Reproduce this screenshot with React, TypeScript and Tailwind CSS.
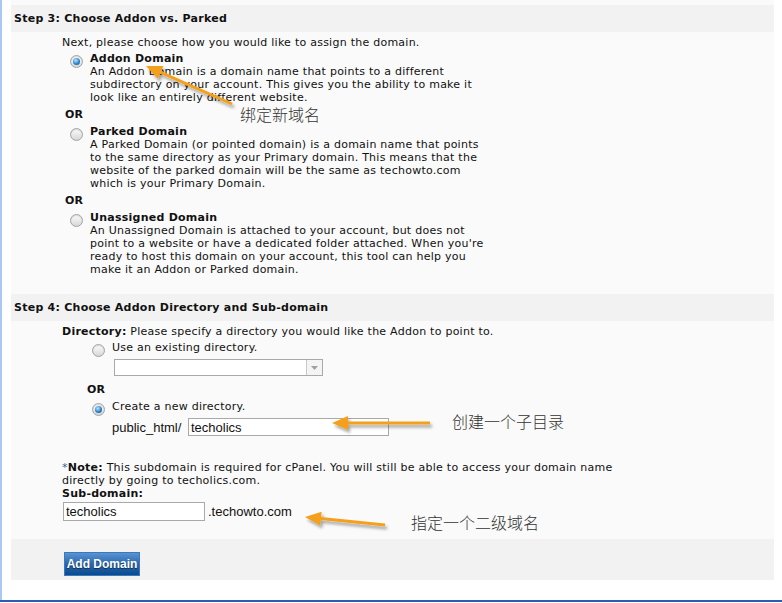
// cPanel Addon Domain form — steps 3 and 4, with the orange note arrows on top.

const body = "font-['DejaVu_Sans','Verdana',sans-serif] text-[11px] leading-[13px] tracking-[0.25px] text-[#111]";
const arial = "font-['Liberation_Sans','Arial',sans-serif] text-[13px] tracking-normal";
const cjk = "font-['Noto_Sans_CJK_SC',sans-serif] text-[16px] leading-[20px] font-light tracking-normal text-[#333]";

function Radio({ checked }: { checked?: boolean }) {
  return (
    <span className="grid h-[13px] w-[13px] shrink-0 place-items-center rounded-full border border-[#a4a4a4] bg-[linear-gradient(180deg,#fdfdfd,#d6d6d6)] shadow-[inset_0_1px_1px_rgba(0,0,0,0.15)]">
      {checked && (
        <span className="h-[7px] w-[7px] rounded-full bg-[radial-gradient(circle_at_40%_35%,#bfe6ff,#2a84cc_55%,#0b4f90)]" />
      )}
    </span>
  );
}

function Option({
  title,
  checked,
  lines,
  className,
}: {
  title: string;
  checked?: boolean;
  lines: string[];
  className?: string;
}) {
  return (
    <div className={`flex gap-[7px] pl-[8px] ${className ?? ""}`}>
      <span className="mt-[3px]">
        <Radio checked={checked} />
      </span>
      <div>
        <div className="font-bold">{title}</div>
        {lines.map((l) => (
          <div key={l}>{l}</div>
        ))}
      </div>
    </div>
  );
}

function Arrow({ from, to }: { from: [number, number]; to: [number, number] }) {
  const dx = to[0] - from[0];
  const dy = to[1] - from[1];
  const len = Math.hypot(dx, dy);
  const ux = dx / len;
  const uy = dy / len;
  const bx = to[0] - ux * 16;
  const by = to[1] - uy * 16;
  const px = -uy * 7;
  const py = ux * 7;
  return (
    <g filter="url(#arrowShadow)">
      <line x1={from[0]} y1={from[1]} x2={bx} y2={by} stroke="#f5a01a" strokeWidth={3} />
      <polygon
        points={`${to[0]},${to[1]} ${bx + px},${by + py} ${bx - px},${by - py}`}
        fill="#f5a01a"
      />
    </g>
  );
}

export default function App() {
  return (
    <div className={`relative flex h-[603px] w-[782px] flex-col bg-white ${body}`}>
      <div className="flex-1 border-l-2 border-[#a9c9f2] pl-[9px] pr-[8px]">
        <div className="flex h-[580px] flex-col bg-[#fafafa] pt-[5px]">
          <div className="flex h-[27px] items-center bg-[#f2f2f2] pl-[3px] font-bold">
            Step 3: Choose Addon vs. Parked
          </div>

          <div className="pl-[51px] pt-[4px]">
            <div>Next, please choose how you would like to assign the domain.</div>
            <Option
              className="mt-[3px]"
              checked
              title="Addon Domain"
              lines={[
                "An Addon Domain is a domain name that points to a different",
                "subdirectory on your account. This gives you the ability to make it",
                "look like an entirely different website.",
              ]}
            />
            <div className="ml-[3px] mt-[4px] font-bold">OR</div>
            <Option
              className="mt-[4px]"
              title="Parked Domain"
              lines={[
                "A Parked Domain (or pointed domain) is a domain name that points",
                "to the same directory as your Primary domain. This means that the",
                "website of the parked domain will be the same as techowto.com",
                "which is your Primary Domain.",
              ]}
            />
            <div className="ml-[3px] mt-[4px] font-bold">OR</div>
            <Option
              className="mt-[4px]"
              title="Unassigned Domain"
              lines={[
                "An Unassigned Domain is attached to your account, but does not",
                "point to a website or have a dedicated folder attached. When you're",
                "ready to host this domain on your account, this tool can help you",
                "make it an Addon or Parked domain.",
              ]}
            />
          </div>

          <div className="mt-[18px] flex h-[27px] items-center bg-[#f2f2f2] pl-[3px] font-bold">
            Step 4: Choose Addon Directory and Sub-domain
          </div>

          <div className="flex-1 pl-[51px] pt-[4px]">
            <div>
              <b>Directory:</b> Please specify a directory you would like the Addon to point to.
            </div>
            <div className="ml-[30px] mt-[3px] flex h-[13px] gap-[7px]">
              <span className="mt-[3px]">
                <Radio />
              </span>
              <span>Use an existing directory.</span>
            </div>
            <div className="ml-[52px] mt-[5px] flex h-[17px] w-[209px] justify-end border border-[#a9a9a9] bg-white">
              <span className="grid w-[16px] place-items-center border-l border-[#c8c8c8] bg-[#f4f4f4]">
                <svg width="7" height="4" viewBox="0 0 7 4">
                  <path d="M0 0h7L3.5 4z" fill="#a0a0a0" />
                </svg>
              </span>
            </div>
            <div className="ml-[25px] mt-[7px] font-bold">OR</div>
            <div className="ml-[30px] mt-[4px] flex h-[13px] gap-[7px]">
              <span className="mt-[3px]">
                <Radio checked />
              </span>
              <span>Create a new directory.</span>
            </div>
            <div className={`ml-[50px] mt-[5px] flex items-center ${arial}`}>
              <span className="w-[76px]">public_html/</span>
              <div className="flex h-[18px] w-[201px] items-center border border-[#a9a9a9] bg-white pl-[2px]">
                techolics
              </div>
            </div>

            <div className="mt-[25px]">
              <span className="text-[#2f5f9e]">*</span>
              <b>Note:</b> This subdomain is required for cPanel. You will still be able to access your domain name
              <br />
              directly by going to techolics.com.
            </div>
            <div className="font-bold">Sub-domain:</div>
            <div className={`ml-px mt-[2px] flex items-center ${arial}`}>
              <div className="flex h-[19px] w-[142px] items-center border border-[#a9a9a9] bg-white pl-[2px]">
                techolics
              </div>
              <span className="ml-[3px]">.techowto.com</span>
            </div>
          </div>

          <div className="h-[41px] bg-[#f2f2f2] pl-[53px] pt-[13px]">
            <button
              type="button"
              className="h-[24px] w-[76px] border border-[#3b78c2] bg-[linear-gradient(180deg,#5a93d2,#2a68ae_50%,#0c4a8e)] font-['Liberation_Sans','Arial',sans-serif] text-[12px] font-bold tracking-normal text-white [text-shadow:0_1px_1px_rgba(0,0,0,0.5)]"
            >
              Add Domain
            </button>
          </div>
        </div>
      </div>
      <div className="mb-px h-[2px] bg-[#2d5cb2]" />

      {/* orange call-outs drawn over the form */}
      <svg className="pointer-events-none absolute left-0 top-0" width="782" height="603">
        <defs>
          <filter id="arrowShadow" x="-20%" y="-50%" width="140%" height="200%">
            <feDropShadow dx="2" dy="3" stdDeviation="1.5" floodColor="#000" floodOpacity="0.35" />
          </filter>
        </defs>
        <Arrow from={[232, 104]} to={[146, 66]} />
        <Arrow from={[430, 423]} to={[332, 423]} />
        <Arrow from={[385, 525]} to={[305, 517]} />
      </svg>
      <span className={`absolute left-[240px] top-[104px] ${cjk}`}>绑定新域名</span>
      <span className={`absolute left-[452px] top-[411px] ${cjk}`}>创建一个子目录</span>
      <span className={`absolute left-[411px] top-[512px] ${cjk}`}>指定一个二级域名</span>
    </div>
  );
}
